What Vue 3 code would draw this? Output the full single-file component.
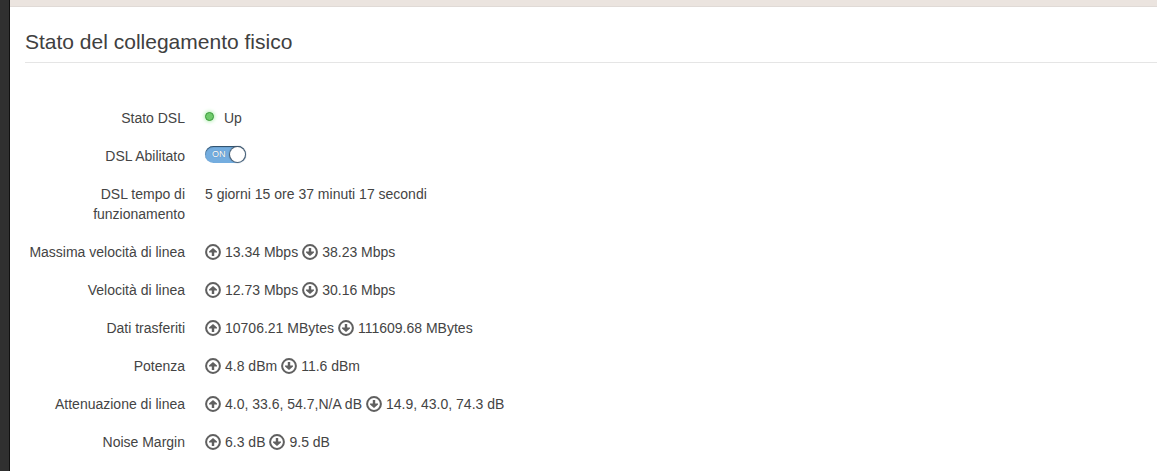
<template>
  <div class="page">
    <div class="page__side"></div>
    <div class="page__body">
      <div class="page__bar"></div>
      <main class="panel">
        <h1 class="panel__title">Stato del collegamento fisico</h1>

        <div class="row">
          <span class="row__label">Stato DSL</span>
          <div class="row__value row__value--state">
            <span class="light"></span>
            <span>Up</span>
          </div>
        </div>

        <div class="row">
          <label class="row__label" for="dsl-enabled">DSL Abilitato</label>
          <div class="row__value row__value--switch">
            <span class="switch">
              <input id="dsl-enabled" v-model="enabled" class="switch__input" type="checkbox" />
              <span class="switch__text">{{ enabled ? 'ON' : 'OFF' }}</span>
            </span>
          </div>
        </div>

        <div class="row">
          <span class="row__label">DSL tempo di funzionamento</span>
          <div class="row__value">5 giorni 15 ore 37 minuti 17 secondi</div>
        </div>

        <div v-for="item in rates" :key="item.label" class="row">
          <span class="row__label">{{ item.label }}</span>
          <div class="row__value row__value--rates">
            <svg class="arrow" viewBox="0 0 16 16" aria-hidden="true">
              <circle cx="8" cy="8" r="6.9" />
              <path d="M8 3.9 12 7.6V8.6H9.2V12H6.8V8.6H4V7.6Z" />
            </svg>
            <span>{{ item.up }}</span>
            <svg class="arrow" viewBox="0 0 16 16" aria-hidden="true">
              <circle cx="8" cy="8" r="6.9" />
              <path d="M8 12.1 4 8.4V7.4H6.8V4H9.2V7.4H12V8.4Z" />
            </svg>
            <span>{{ item.down }}</span>
          </div>
        </div>
      </main>
    </div>
  </div>
</template>

<script setup>
import { ref } from 'vue'

const enabled = ref(true)

const rates = [
  { label: 'Massima velocità di linea', up: '13.34 Mbps', down: '38.23 Mbps' },
  { label: 'Velocità di linea', up: '12.73 Mbps', down: '30.16 Mbps' },
  { label: 'Dati trasferiti', up: '10706.21 MBytes', down: '111609.68 MBytes' },
  { label: 'Potenza', up: '4.8 dBm', down: '11.6 dBm' },
  { label: 'Attenuazione di linea', up: '4.0, 33.6, 54.7,N/A dB', down: '14.9, 43.0, 74.3 dB' },
  { label: 'Noise Margin', up: '6.3 dB', down: '9.5 dB' }
]
</script>

<style>
body {
  margin: 0;
  background: #ffffff;
}
</style>

<style scoped>
.page {
  display: flex;
  min-height: 100vh;
  font-family: 'Liberation Sans', Arial, sans-serif;
  font-size: 14px;
  line-height: 20px;
  color: #444444;
}

.page__side {
  flex: none;
  box-sizing: border-box;
  width: 10px;
  background: #303030;
  border-right: 1px solid #111111;
}

.page__body {
  flex: 1;
  min-width: 0;
}

.page__bar {
  box-sizing: border-box;
  height: 7px;
  background: #ebe4df;
  border-bottom: 1px solid #e0dad6;
}

.panel {
  padding: 15px 0 0 15px;
}

.panel__title {
  margin: 0 0 45px;
  border-bottom: 1px solid #e5e5e5;
  font-size: 21px;
  font-weight: normal;
  line-height: 40px;
  color: #404040;
}

.row {
  display: flex;
  gap: 20px;
  margin-bottom: 18px;
}

.row__label {
  flex: none;
  width: 160px;
  text-align: right;
}

.row__value {
  flex: 1;
  min-width: 0;
}

.row__value--state {
  display: flex;
  gap: 10px;
}

.row__value--switch {
  display: flex;
  height: 20px;
  align-items: flex-start;
}

.row__value--rates {
  display: flex;
  align-items: center;
  gap: 4px;
}

.light {
  box-sizing: border-box;
  width: 9px;
  height: 9px;
  margin-top: 4px;
  border: 1px solid #3c9a3c;
  border-radius: 50%;
  background: #6fcb6b;
  box-shadow: 0 0 4px #8be68b;
}

.switch {
  position: relative;
  display: flex;
  width: 41px;
  height: 17px;
}

.switch__input {
  appearance: none;
  box-sizing: border-box;
  width: 100%;
  height: 100%;
  margin: 0;
  padding: 1px;
  display: flex;
  border-radius: 9px;
  background: #999999;
  box-shadow: inset 0 1px 1px #2c4a63;
  cursor: pointer;
}

.switch__input::before {
  content: '';
  width: 15px;
  height: 15px;
  border-radius: 50%;
  background: #ffffff;
  box-shadow: 0 0 1px 1px #46586a;
}

.switch__input:checked {
  justify-content: flex-end;
  background: #74addf;
}

.switch__text {
  position: absolute;
  top: 0;
  left: 7px;
  font-size: 9px;
  line-height: 17px;
  color: #ffffff;
  text-shadow: 0 0 1px #4a7399;
  pointer-events: none;
}

.switch__input:not(:checked) + .switch__text {
  left: 19px;
}

.arrow {
  flex: none;
  width: 16px;
  height: 16px;
  fill: #606060;
}

.arrow circle {
  fill: none;
  stroke: #606060;
  stroke-width: 2;
}
</style>
